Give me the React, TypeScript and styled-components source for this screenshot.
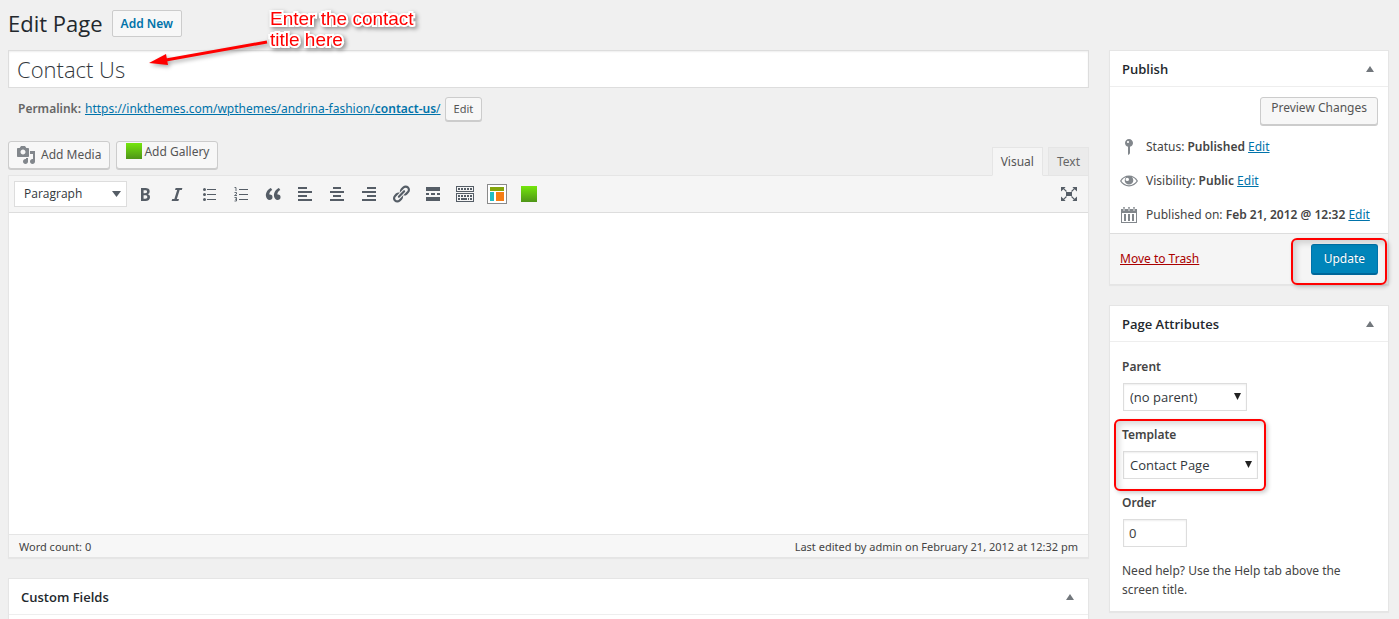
import React from 'react';
import styled, { createGlobalStyle } from 'styled-components';

const GlobalStyle = createGlobalStyle`
  *, *::before, *::after { box-sizing: border-box; }
  body {
    margin: 0;
    background: #f0f0f0;
    color: #444;
    font: 12px/20px "Noto Sans", "Open Sans", sans-serif;
  }
  button, input, select, textarea { font: inherit; color: inherit; margin: 0; }
  h1, h2, p { margin: 0; }
  a { color: #0073aa; }
`;

const Page = styled.div`
  position: relative;
  display: grid;
  grid-template-columns: minmax(0, 1fr) 280px;
  grid-template-rows: auto 1fr;
  column-gap: 20px;
  min-height: 100vh;
  padding: 0 10px 0 8px;
`;

const Heading = styled.header`
  grid-column: 1 / -1;
  display: flex;
  align-items: center;
  gap: 9px;
  height: 50px;
  padding-bottom: 4px;
`;

const PageTitle = styled.h1`
  font-family: "Open Sans", sans-serif;
  font-size: 22px;
  line-height: 30px;
  font-weight: 400;
  color: #23282d;
`;

const AddNew = styled.a`
  border: 1px solid #ccc;
  border-radius: 2px;
  background: #f7f7f7;
  padding: 3px 8px 2px;
  font-weight: 600;
  text-decoration: none;
`;

const Main = styled.main`
  display: flex;
  flex-direction: column;
`;

const TitleInput = styled.input`
  width: 100%;
  height: 38px;
  border: 1px solid #ddd;
  background: #fff;
  box-shadow: inset 0 1px 2px rgba(0, 0, 0, 0.07);
  padding: 3px 8px;
  font-family: "Open Sans", sans-serif;
  font-size: 22px;
  font-weight: 300;
  color: #32373c;
  outline: none;
`;

const Permalink = styled.div`
  display: flex;
  align-items: center;
  gap: 4px;
  height: 25px;
  margin-top: 8px;
  padding-left: 10px;
  strong { font-weight: 600; color: #666; }
  b { font-weight: 600; }
`;

const Button = styled.button<{ $size?: 'small' | 'normal'; $raised?: boolean }>`
  display: inline-flex;
  align-items: ${(p) => (p.$raised ? 'flex-start' : 'center')};
  gap: 4px;
  height: ${(p) => (p.$size === 'small' ? '24px' : '28px')};
  padding: 0 ${(p) => (p.$size === 'small' ? '8px' : '10px')};
  border: 1px solid #ccc;
  border-radius: 3px;
  background: #f7f7f7;
  box-shadow: 0 1px 0 #ccc;
  color: #555;
  font-size: ${(p) => (p.$size === 'small' ? '11px' : '12px')};
  line-height: 20px;
  white-space: nowrap;
`;

const MediaButton = styled(Button)`
  gap: 5px;
  padding: 0 8px 0 7px;
  svg { color: #82878c; }
`;

const EditorTop = styled.div`
  display: flex;
  justify-content: space-between;
  align-items: flex-end;
  margin-top: 20px;
`;

const MediaButtons = styled.div`
  display: flex;
  gap: 6px;
  padding-bottom: 6px;
`;

const GreenSwatch = styled.span`
  width: 16px;
  height: 16px;
  background: linear-gradient(#74e60c, #4f9518);
`;

const GalleryMark = styled(GreenSwatch)`
  margin: 1px -3px 0 2px;
`;

const Tabs = styled.div`
  display: flex;
  gap: 5px;
`;

const Tab = styled.button<{ $active?: boolean }>`
  position: relative;
  z-index: ${(p) => (p.$active ? 1 : 0)};
  height: 29px;
  margin-bottom: -1px;
  padding: 0 8px;
  border: 1px solid #e5e5e5;
  border-bottom-color: ${(p) => (p.$active ? '#f5f5f5' : '#e5e5e5')};
  background: ${(p) => (p.$active ? '#f5f5f5' : '#ebebeb')};
  color: ${(p) => (p.$active ? '#555' : '#666')};
`;

const Editor = styled.section`
  border: 1px solid #e5e5e5;
  box-shadow: 0 1px 1px rgba(0, 0, 0, 0.04);
`;

const Toolbar = styled.div`
  display: flex;
  align-items: center;
  gap: 4px;
  height: 37px;
  padding: 0 5px;
  border-bottom: 1px solid #ddd;
  background: #f5f5f5;
`;

const IconButton = styled.button<{ $end?: boolean }>`
  display: flex;
  align-items: center;
  justify-content: center;
  width: 28px;
  height: 28px;
  padding: 0;
  margin-left: ${(p) => (p.$end ? 'auto' : '0')};
  border: 0;
  background: none;
  color: #555d66;
`;

const Canvas = styled.textarea`
  display: block;
  width: 100%;
  height: 321px;
  border: 0;
  padding: 10px;
  background: #fff;
  outline: none;
  resize: none;
`;

const StatusBar = styled.div`
  display: flex;
  justify-content: space-between;
  height: 23px;
  padding: 2px 10px;
  border-top: 1px solid #e5e5e5;
  background: #f7f7f7;
  font-size: 11px;
`;

const SelectWrap = styled.div<{ $width: number; $field?: boolean }>`
  position: relative;
  display: block;
  width: ${(p) => p.$width}px;
  margin-left: ${(p) => (p.$field ? '1px' : '0')};
`;

const Select = styled.select<{ $bar?: boolean }>`
  appearance: none;
  display: block;
  width: 100%;
  height: ${(p) => (p.$bar ? '26px' : '28px')};
  padding: 0 ${(p) => (p.$bar ? '9px' : '6px')};
  border: 1px solid #ddd;
  border-radius: 0;
  background: #fff;
  box-shadow: ${(p) => (p.$bar ? 'none' : 'inset 0 1px 2px rgba(0, 0, 0, 0.07)')};
  color: #32373c;
  font-family: "Open Sans", sans-serif;
  font-size: ${(p) => (p.$bar ? '12px' : '13px')};
  outline: none;
`;

const SelectArrow = styled.svg<{ $right: number }>`
  position: absolute;
  top: 10px;
  right: ${(p) => p.$right}px;
  pointer-events: none;
`;

const Side = styled.aside`
  display: flex;
  flex-direction: column;
  gap: 20px;
`;

const Panel = styled.section<{ $fill?: boolean }>`
  border: 1px solid #e5e5e5;
  border-bottom-width: ${(p) => (p.$fill ? '0' : '1px')};
  background: #fff;
  box-shadow: 0 1px 1px rgba(0, 0, 0, 0.04);
  flex: ${(p) => (p.$fill ? '1' : 'none')};
  margin-top: ${(p) => (p.$fill ? '20px' : '0')};
`;

const PanelHead = styled.div`
  display: flex;
  align-items: center;
  justify-content: space-between;
  height: 36px;
  padding: 0 12px;
  border-bottom: 1px solid #eee;
`;

const PanelTitle = styled.h2`
  font-family: "Open Sans", sans-serif;
  font-size: 13px;
  line-height: 20px;
  font-weight: 600;
  color: #23282d;
`;

const Toggle = styled.button`
  display: flex;
  padding: 2px;
  border: 0;
  background: none;
  color: #72777c;
`;

const PreviewRow = styled.div`
  display: flex;
  justify-content: flex-end;
  padding: 10px 10px 5px;
`;

const StatusRow = styled.div`
  display: flex;
  align-items: center;
  gap: 7px;
  height: 34px;
  padding: 0 10px 0 9px;
  white-space: nowrap;
  svg { color: #82878c; }
  b { font-weight: 600; }
`;

const PublishFooter = styled.div`
  display: flex;
  align-items: center;
  justify-content: space-between;
  height: 51px;
  margin-top: 1px;
  padding: 0 10px;
  border-top: 1px solid #ddd;
  background: #f5f5f5;
`;

const TrashLink = styled.a`
  color: #a00;
`;

const UpdateButton = styled.button`
  display: block;
  height: 31px;
  padding: 0 12px;
  border: 1px solid #0073aa;
  border-bottom: 2px solid #006799;
  border-radius: 3px;
  background: #0085ba;
  color: #fff;
  text-shadow: 0 -1px 1px #006799;
`;

const Highlighted = styled.div`
  position: relative;
`;

const HighlightFrame = styled.span<{ $inset: string }>`
  position: absolute;
  inset: ${(p) => p.$inset};
  border: 2px solid #f00;
  border-radius: 6px;
  box-shadow: 2px 2px 4px rgba(0, 0, 0, 0.2), inset 3px 3px 6px rgba(0, 0, 0, 0.16);
  pointer-events: none;
`;

const Attributes = styled.div`
  display: flex;
  flex-direction: column;
  gap: 14px;
  padding: 15px 12px 12px;
`;

const Field = styled.div`
  position: relative;
  display: flex;
  flex-direction: column;
  gap: 6px;
`;

const FieldLabel = styled.label`
  font-weight: 600;
`;

const OrderInput = styled.input`
  width: 64px;
  height: 28px;
  margin-left: 1px;
  padding: 0 5px;
  border: 1px solid #ddd;
  background: #fff;
  box-shadow: inset 0 1px 2px rgba(0, 0, 0, 0.07);
  font-size: 13px;
  outline: none;
`;

const Help = styled.p`
  line-height: 19px;
`;

const Note = styled.div`
  position: absolute;
  top: 8px;
  left: 270px;
  width: 170px;
  color: #f00;
  font: 19px/21px "Liberation Sans", sans-serif;
  -webkit-text-stroke: 4px #fff;
  paint-order: stroke fill;
  filter: drop-shadow(2px 2px 2px rgba(0, 0, 0, 0.4));
  pointer-events: none;
`;

const NoteArrow = styled.svg`
  position: absolute;
  top: 36px;
  left: 144px;
  filter: drop-shadow(2px 2px 2px rgba(0, 0, 0, 0.35));
  pointer-events: none;
`;

const paths = {
  bold: 'M6 4v13h4.54c1.37 0 2.46-.33 3.26-1 .8-.66 1.2-1.58 1.2-2.77 0-.84-.17-1.51-.51-2.01s-.9-.85-1.67-1.03v-.09c.57-.1 1.02-.4 1.36-.9s.51-1.13.51-1.91c0-1.14-.39-1.98-1.17-2.5C12.75 4.26 11.5 4 9.78 4H6zm2.57 5.15V6.26h1.36c.73 0 1.27.11 1.61.32.34.22.51.58.51 1.07 0 .54-.16.92-.47 1.15s-.82.35-1.51.35h-1.5zm0 2.19h1.6c1.44 0 2.16.53 2.16 1.61 0 .6-.17 1.05-.51 1.34s-.86.43-1.57.43H8.57v-3.38z',
  italic: 'M14.78 6h-2.13l-2.8 9h2.12l-.62 2H4.6l.62-2h2.14l2.8-9H8.03l.62-2h6.75z',
  bullets: 'M5.5 7a1.5 1.5 0 110-3 1.5 1.5 0 010 3zM8 5h9v1H8zM5.5 12a1.5 1.5 0 110-3 1.5 1.5 0 010 3zM8 10h9v1H8zM5.5 17a1.5 1.5 0 110-3 1.5 1.5 0 010 3zM8 15h9v1H8z',
  quote: 'M9.49 13.22c0-.74-.2-1.38-.61-1.9-.62-.78-1.83-.88-2.53-.72-.29-1.65 1.11-3.75 2.92-4.65L7.88 4c-2.73 1.3-5.42 4.28-4.96 8.05C3.21 14.43 4.59 16 6.54 16c.85 0 1.56-.25 2.12-.75s.83-1.18.83-2.03zm8.05 0c0-.74-.2-1.38-.61-1.9-.63-.78-1.83-.88-2.53-.72-.29-1.65 1.11-3.75 2.92-4.65L15.93 4c-2.73 1.3-5.41 4.28-4.95 8.05.29 2.38 1.66 3.95 3.61 3.95.85 0 1.56-.25 2.12-.75s.83-1.18.83-2.03z',
  left: 'M12 5V3H3v2h9zm5 4V7H3v2h14zm-5 4v-2H3v2h9zm5 4v-2H3v2h14z',
  center: 'M14 5V3H6v2h8zm3 4V7H3v2h14zm-3 4v-2H6v2h8zm3 4v-2H3v2h14z',
  right: 'M17 5V3H8v2h9zm0 4V7H3v2h14zm0 4v-2H8v2h9zm0 4v-2H3v2h14z',
  link: 'M17.74 2.76c1.68 1.69 1.68 4.41 0 6.1l-1.53 1.52c-1.12 1.12-2.7 1.47-4.14 1.09l2.62-2.61.76-.77.76-.76c.84-.84.84-2.2 0-3.04-.84-.85-2.2-.85-3.04 0l-.77.76-3.38 3.38c-.37-1.44-.02-3.02 1.1-4.14l1.52-1.53c1.69-1.68 4.42-1.68 6.1 0zM8.59 13.43l5.34-5.34c.42-.42.42-1.1 0-1.52-.44-.43-1.13-.39-1.53 0l-5.33 5.34c-.42.42-.42 1.1 0 1.52.44.43 1.13.39 1.52 0zm-.76 2.29l4.14-4.15c.38 1.44.03 3.02-1.09 4.14l-1.52 1.53c-1.69 1.68-4.41 1.68-6.1 0-1.68-1.68-1.68-4.42 0-6.1l1.53-1.52c1.12-1.12 2.7-1.47 4.14-1.1l-4.14 4.15c-.85.84-.85 2.2 0 3.05.84.84 2.2.84 3.04 0z',
  more: 'M17 7V3H3v4h14zM6 11V9H3v2h3zm6 0V9H8v2h4zm5 0V9h-3v2h3zm0 6v-4H3v4h14z',
  sink: 'M1 2h18v6H1zM2 3v4h16V3zM3 4h2v2H3zM6 4h2v2H6zM9 4h2v2H9zM12 4h2v2h-2zM15 4h2v2h-2zM1 9h18v9H1zM2 10v7h16v-7zM3 11h2v2H3zM6 11h2v2H6zM9 11h2v2H9zM12 11h2v2h-2zM15 11h2v2h-2zM3 14h2v2H3zM6 14h6v2H6zM13 14h1v2h-1zM15 14h2v2h-2z',
  expand: 'M7 8h6v4H7zM2 3h4.600L5.200 4.400 7.900 7.100l-.8.8L4.400 5.200 2 7.600zM18 3v4.600l-2.400-2.400-2.700 2.700-.8-.8 2.700-2.700L13.400 3zM2 17v-4.600l2.400 2.400 2.700-2.700.8.8-2.700 2.700L6.600 17zM18 17h-4.600l1.400-1.400-2.700-2.700.8-.8 2.700 2.700L18 12.400z',
  media: 'M13 11V4c0-.55-.45-1-1-1h-1.67L9 1H5L3.67 3H2c-.55 0-1 .45-1 1v7c0 .55.45 1 1 1h10c.55 0 1-.45 1-1zM7 4.5c1.38 0 2.5 1.12 2.5 2.5S8.38 9.5 7 9.5 4.5 8.38 4.5 7 5.62 4.5 7 4.5zM14 6h5v10.5c0 1.38-1.12 2.5-2.5 2.5S14 17.88 14 16.5s1.12-2.5 2.5-2.5c.17 0 .34.02.5.05V9h-3V6zm-4 8.05V13h2v3.5c0 1.38-1.12 2.5-2.5 2.5S7 17.88 7 16.5 8.12 14 9.5 14c.17 0 .34.02.5.05z',
  pin: 'M14 6c0 1.86-1.28 3.41-3 3.86V16c0 1-2 2-2 2V9.86c-1.72-.45-3-2-3-3.86 0-2.21 1.79-4 4-4s4 1.79 4 4zM8 5c0 .55.45 1 1 1s1-.45 1-1-.45-1-1-1-1 .45-1 1z',
  eye: 'M1 10C3 6.500 6.300 4.600 10 4.600S17 6.500 19 10C17 13.500 13.700 15.400 10 15.400S3 13.500 1 10zM2.400 10C4.200 12.700 7 14.200 10 14.200S15.800 12.700 17.600 10C16.500 8.200 14.800 6.800 12.900 6.100A4.300 4.300 0 1 1 7.100 6.100C5.200 6.800 3.500 8.200 2.400 10zM8.300 6.700A1.700 1.700 0 1 0 8.300 10.100 1.700 1.700 0 0 0 8.300 6.700z',
  calendar: 'M2 4h2V3q0-1 1-1t1 1v1h3V3q0-1 1-1t1 1v1h3V3q0-1 1-1t1 1v1h2v14H2zM3 8v9h14V8zM4.600 3v3h.8V3zM9.600 3v3h.8V3zM14.600 3v3h.8V3zM5 9h2v7H5zM9 9h2v7H9zM13 9h2v7h-2z',
};

function Icon({ name, size = 20 }: { name: keyof typeof paths; size?: number }) {
  return (
    <svg width={size} height={size} viewBox="0 0 20 20" fill="currentColor" fillRule="evenodd" aria-hidden="true">
      <path d={paths[name]} />
    </svg>
  );
}

function NumberedIcon() {
  return (
    <svg width="20" height="20" viewBox="0 0 20 20" fill="currentColor" aria-hidden="true">
      <path d="M8 5h9v1H8zM8 10h9v1H8zM8 15h9v1H8z" />
      <path
        d="M3.500 3.500h1.500V7M3.500 8.500h2v1.500l-2 1.500h2.500M3.500 13.500h2v3.500h-2M4 15.200h1.500"
        fill="none"
        stroke="currentColor"
        strokeWidth="0.9"
      />
    </svg>
  );
}

function LayoutIcon() {
  return (
    <svg width="20" height="20" viewBox="0 0 20 20" aria-hidden="true">
      <rect x="0.5" y="0.5" width="19" height="19" fill="#fff" stroke="#8a8a8a" />
      <path fill="#84a50b" d="M3 3h14v4H3z" />
      <path fill="#1fbdc4" d="M3 8h4v9H3z" />
      <path fill="#f57c14" d="M9 8h8v9H9z" />
    </svg>
  );
}

function PanelToggle({ label }: { label: string }) {
  return (
    <Toggle type="button" aria-label={`Toggle ${label}`}>
      <svg width="8" height="6" viewBox="0 0 8 6" fill="currentColor"><path d="M0 6l4-6 4 6z" /></svg>
    </Toggle>
  );
}

const tools: { label: string; icon: React.ReactNode }[] = [
  { label: 'Bold', icon: <Icon name="bold" /> },
  { label: 'Italic', icon: <Icon name="italic" /> },
  { label: 'Bulleted list', icon: <Icon name="bullets" /> },
  { label: 'Numbered list', icon: <NumberedIcon /> },
  { label: 'Blockquote', icon: <Icon name="quote" /> },
  { label: 'Align left', icon: <Icon name="left" /> },
  { label: 'Align center', icon: <Icon name="center" /> },
  { label: 'Align right', icon: <Icon name="right" /> },
  { label: 'Insert link', icon: <Icon name="link" /> },
  { label: 'Read More tag', icon: <Icon name="more" /> },
  { label: 'Toolbar toggle', icon: <Icon name="sink" /> },
  { label: 'Shortcodes', icon: <LayoutIcon /> },
  { label: 'Gallery', icon: <GreenSwatch /> },
];

export default function App() {
  return (
    <>
      <GlobalStyle />
      <Page>
        <Heading>
          <PageTitle>Edit Page</PageTitle>
          <AddNew href="#new">Add New</AddNew>
        </Heading>

        <Main>
          <TitleInput aria-label="Title" defaultValue="Contact Us" />
          <Permalink>
            <strong>Permalink:</strong>
            <a href="#permalink">
              https://inkthemes.com/wpthemes/andrina-fashion/<b>contact-us</b>/
            </a>
            <Button type="button" $size="small">Edit</Button>
          </Permalink>

          <EditorTop>
            <MediaButtons>
              <MediaButton type="button"><Icon name="media" />Add Media</MediaButton>
              <MediaButton type="button" $raised><GalleryMark />Add Gallery</MediaButton>
            </MediaButtons>
            <Tabs>
              <Tab type="button" $active>Visual</Tab>
              <Tab type="button">Text</Tab>
            </Tabs>
          </EditorTop>
          <Editor>
            <Toolbar>
              <SelectWrap $width={113}>
                <Select $bar aria-label="Format"><option>Paragraph</option></Select>
                <SelectArrow $right={6} width="9" height="6" viewBox="0 0 9 6"><path fill="#555d66" d="M0 0h9L4.500 6z" /></SelectArrow>
              </SelectWrap>
              {tools.map((t) => (
                <IconButton key={t.label} type="button" aria-label={t.label}>{t.icon}</IconButton>
              ))}
              <IconButton type="button" $end aria-label="Distraction-free writing"><Icon name="expand" /></IconButton>
            </Toolbar>
            <Canvas aria-label="Content" />
            <StatusBar>
              <span>Word count: 0</span>
              <span>Last edited by admin on February 21, 2012 at 12:32 pm</span>
            </StatusBar>
          </Editor>

          <Panel $fill>
            <PanelHead>
              <PanelTitle>Custom Fields</PanelTitle>
              <PanelToggle label="Custom Fields" />
            </PanelHead>
          </Panel>
        </Main>

        <Side>
          <Panel>
            <PanelHead>
              <PanelTitle>Publish</PanelTitle>
              <PanelToggle label="Publish" />
            </PanelHead>
            <PreviewRow><Button type="button" $raised>Preview Changes</Button></PreviewRow>
            <StatusRow><Icon name="pin" /><span>Status: <b>Published</b> <a href="#status">Edit</a></span></StatusRow>
            <StatusRow><Icon name="eye" /><span>Visibility: <b>Public</b> <a href="#visibility">Edit</a></span></StatusRow>
            <StatusRow><Icon name="calendar" /><span>Published on: <b>Feb 21, 2012 @ 12:32</b> <a href="#date">Edit</a></span></StatusRow>
            <PublishFooter>
              <TrashLink href="#trash">Move to Trash</TrashLink>
              <Highlighted>
                <UpdateButton type="button">Update</UpdateButton>
                <HighlightFrame $inset="-6px -9px -10px -20px" />
              </Highlighted>
            </PublishFooter>
          </Panel>

          <Panel>
            <PanelHead>
              <PanelTitle>Page Attributes</PanelTitle>
              <PanelToggle label="Page Attributes" />
            </PanelHead>
            <Attributes>
              <Field>
                <FieldLabel htmlFor="parent">Parent</FieldLabel>
                <SelectWrap $width={124} $field>
                  <Select id="parent"><option>(no parent)</option></Select>
                  <SelectArrow $right={6} width="7" height="7" viewBox="0 0 7 7"><path fill="#222" d="M0 0h7L3.500 7z" /></SelectArrow>
                </SelectWrap>
              </Field>
              <Field>
                <FieldLabel htmlFor="template">Template</FieldLabel>
                <SelectWrap $width={135} $field>
                  <Select id="template"><option>Contact Page</option></Select>
                  <SelectArrow $right={6} width="7" height="7" viewBox="0 0 7 7"><path fill="#222" d="M0 0h7L3.500 7z" /></SelectArrow>
                </SelectWrap>
                <HighlightFrame $inset="-6px 110px -12px -8px" />
              </Field>
              <Field>
                <FieldLabel htmlFor="order">Order</FieldLabel>
                <OrderInput id="order" defaultValue="0" />
              </Field>
              <Help>Need help? Use the Help tab above the screen title.</Help>
            </Attributes>
          </Panel>
        </Side>

        <NoteArrow width="128" height="36" viewBox="0 0 128 36">
          <path d="M123 6L22 24" stroke="#f00" strokeWidth="3" />
          <path d="M5 27l17-9 2 11z" fill="#f00" />
        </NoteArrow>
        <Note>Enter the contact title here</Note>
      </Page>
    </>
  );
}
